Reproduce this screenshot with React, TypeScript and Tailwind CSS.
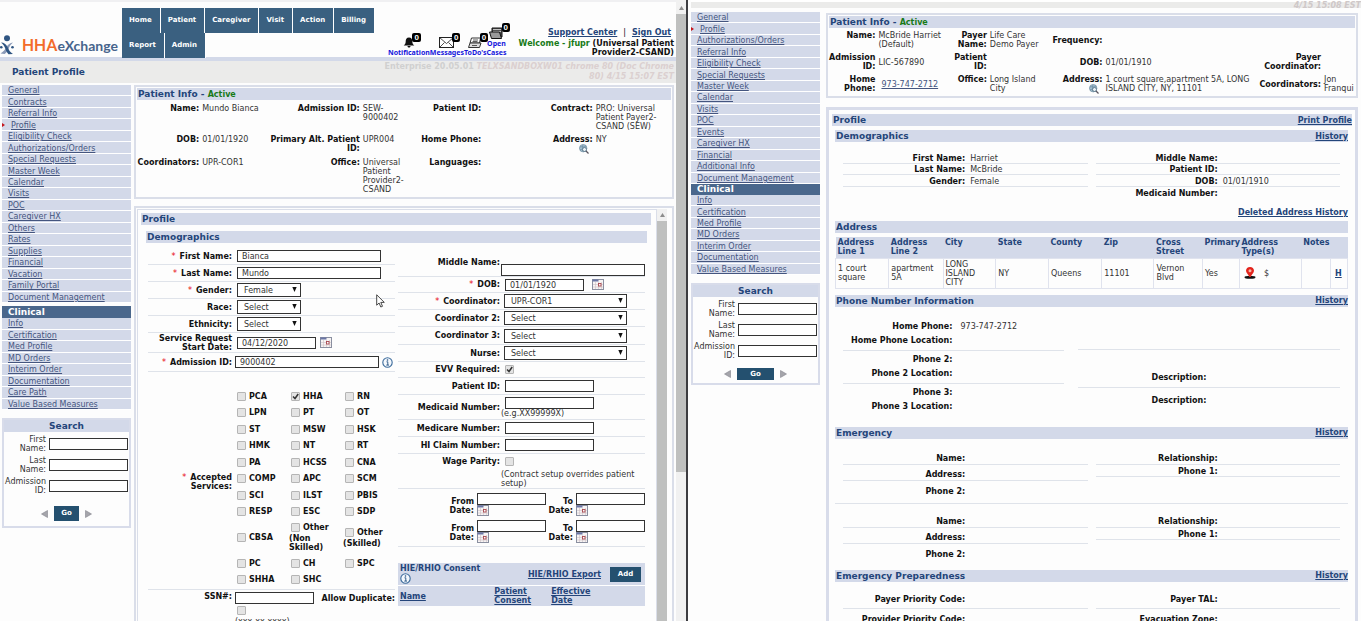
import { useState } from 'react';
import type { ReactNode } from 'react';

const patientLinks = [
    'General', 'Contracts', 'Referral Info', 'Profile', 'Eligibility Check', 'Authorizations/Orders',
    'Special Requests', 'Master Week', 'Calendar', 'Visits', 'POC', 'Caregiver HX', 'Others', 'Rates',
    'Supplies', 'Financial', 'Vacation', 'Family Portal', 'Document Management',
];
const patientClinicalLinks = [
    'Info', 'Certification', 'Med Profile', 'MD Orders', 'Interim Order', 'Documentation', 'Care Path',
    'Value Based Measures',
];
const payerLinks = [
    'General', 'Profile', 'Authorizations/Orders', 'Referral Info', 'Eligibility Check', 'Special Requests',
    'Master Week', 'Calendar', 'Visits', 'POC', 'Events', 'Caregiver HX', 'Financial', 'Additional Info',
    'Document Management',
];
const payerClinicalLinks = [
    'Info', 'Certification', 'Med Profile', 'MD Orders', 'Interim Order', 'Documentation',
    'Value Based Measures',
];
const tabs = ['Home', 'Patient', 'Caregiver', 'Visit', 'Action', 'Billing', 'Report', 'Admin'];

const services = [
    'PCA', 'HHA', 'RN', 'LPN', 'PT', 'OT', 'ST', 'MSW', 'HSK', 'HMK', 'NT', 'RT', 'PA', 'HCSS', 'CNA',
    'COMP', 'APC', 'SCM', 'SCI', 'ILST', 'PBIS', 'RESP', 'ESC', 'SDP',
];
const otherServices = ['CBSA', 'Other (Non Skilled)', 'Other (Skilled)'];
const moreServices = ['PC', 'CH', 'SPC', 'SHHA', 'SHC'];

const inputClass = 'h-3 border border-[#333] bg-white px-1 pt-[1px] text-[8px] leading-[9px] text-[#333] outline-none';

/* ---------- Icons ---------- */

const CalendarIcon = () => (
    <svg className="h-[11px] w-3 shrink-0" viewBox="0 0 12 11">
        <rect x="0.5" y="0.5" width="11" height="10" fill="#f7f4f4" stroke="#8a8fa0" />
        <rect x="0.5" y="0.5" width="6" height="2" fill="#6b76a5" />
        <path d="M3.5 3v7M6.5 3v7M9.5 3v7M1 5.500h10M1 8h10" stroke="#cdbfc4" strokeWidth="0.6" />
        <rect x="6.500" y="4.500" width="2.500" height="2.500" fill="#fff" stroke="#a8474f" strokeWidth="0.9" />
    </svg>
);

const InfoIcon = () => (
    <svg className="h-[11px] w-[11px] shrink-0" viewBox="0 0 11 11">
        <circle cx="5.500" cy="5.500" r="4.700" fill="#f4f8fd" stroke="#3d6c9c" strokeWidth="1.100" />
        <circle cx="5.500" cy="3" r="0.800" fill="#1f4e80" />
        <path d="M4.500 4.800h1.300v3.200M4.300 8.100h2.700" stroke="#1f4e80" fill="none" strokeWidth="0.900" />
    </svg>
);

const GlobeIcon = () => (
    <svg className="h-[10px] w-[10px] shrink-0" viewBox="0 0 10 10">
        <circle cx="4.200" cy="4.200" r="3.700" fill="#a9c3d3" stroke="#7592a5" strokeWidth="0.800" />
        <path d="M1 3c2-1 3 1 6-1M1 6c2-1 3 0 4-1M4 1c-1 2-1 4 0 6" stroke="#5d7f95" strokeWidth="0.600" fill="none" />
        <circle cx="5.500" cy="5.500" r="2" fill="#e9f1f6" stroke="#4e6c80" strokeWidth="0.800" />
        <path d="M7 7l2.500 2.500" stroke="#5b5560" strokeWidth="1.300" />
    </svg>
);

const LogoMark = () => (
    <svg className="h-5 w-[14px] shrink-0" viewBox="0 0 14 20">
        <circle cx="7" cy="3.300" r="3" fill="#2f5582" />
        <path d="M13 7.500c-3 .3-5 2-6.500 4.500-1.300 2.500-3 4.500-6 6.500l4.200.5c2-1.500 3-3.500 4-5.500 1-2.500 2-4 4.300-6z" fill="#8a9ab8" />
        <path d="M1 7.500c3 .2 5 1.500 6.500 4.500 1.300 3 2.500 5 5.500 7l-4.500.3c-1.500-1.500-2.300-3.300-3-5.300-1-2.500-2-4.500-4.500-6.500z" fill="#2f5582" />
        <circle cx="12.500" cy="12.300" r="1.300" fill="#2f5582" />
        <circle cx="1.300" cy="12.300" r="1.300" fill="#2f5582" />
    </svg>
);

const BellIcon = () => (
    <svg className="h-[11px] w-3" viewBox="0 0 12 11">
        <path d="M6 0.500c2.500 0 3.300 1.800 3.300 4 0 2 .8 3 2 4H.7c1.200-1 2-2 2-4 0-2.200.8-4 3.300-4z" fill="#111" />
        <path d="M4.500 9h3c0 2-3 2-3 0z" fill="#111" />
    </svg>
);
const MailIcon = () => (
    <svg className="h-[11px] w-[15px]" viewBox="0 0 15 11">
        <rect x="0.500" y="0.500" width="14" height="10" fill="#fff" stroke="#222" />
        <path d="M.5.5l7 6 7-6M.5 10.500l5-5M14.500 10.500l-5-5" fill="none" stroke="#222" strokeWidth="0.800" />
    </svg>
);
const TodoIcon = () => (
    <svg className="h-[11px] w-[14px]" viewBox="0 0 14 11">
        <path d="M3.500 1h9l-1 5H2z" fill="#fff" stroke="#333" />
        <path d="M2 6l-1.500 4.500h11L13 6z" fill="#ddd" stroke="#333" />
        <path d="M5 3h5M4.500 4.500h5M4 8.500h5" stroke="#333" strokeWidth="0.800" />
    </svg>
);
const CasesIcon = () => (
    <svg className="h-3 w-[15px]" viewBox="0 0 15 12">
        <path d="M3 1h10v9H3z" fill="#555" stroke="#111" />
        <path d="M4 2.500h8M4 4.500h8" stroke="#ddd" strokeWidth="0.800" />
        <path d="M.5 5h10l2 6.500h-10z" fill="#999" stroke="#111" />
    </svg>
);
const PinIcon = () => (
    <svg className="h-3 w-3" viewBox="0 0 12 12">
        <ellipse cx="6" cy="10.300" rx="5.500" ry="1.500" fill="#111" />
        <path d="M6 0c2.400 0 4 1.600 4 3.800C10 6 7.500 7.300 6.600 10H5.400C4.500 7.300 2 6 2 3.800 2 1.600 3.600 0 6 0z" fill="#e3241c" />
        <circle cx="6" cy="3.700" r="1.500" fill="#f7b5a8" />
    </svg>
);
const Arrow = ({ left = false }: { left?: boolean }) => (
    <svg className="h-2 w-[7px]" viewBox="0 0 7 8">
        <path d={left ? 'M6.500 0.500v7L0.500 4z' : 'M0.500 0.500v7L6.500 4z'} fill="#a5a5ab" stroke="#85858d" strokeWidth="0.600" />
    </svg>
);

/* ---------- Shared pieces ---------- */

function NavList({ links }: { links: string[] }) {
    return (
        <>
            {links.map((link) => (
                <li key={link} className="flex items-center border-b border-white bg-[#d3d9e9] pl-[6px] pt-[1px]">
                    {link === 'Profile' && (
                        <svg className="-ml-[6px] h-1 w-[3px]" viewBox="0 0 3 4"><path d="M0 0l3 2-3 2z" fill="#c4151c" /></svg>
                    )}
                    <a href="#" className={`text-[#44557f] underline ${link === 'Profile' ? 'ml-[6px]' : ''}`}>{link}</a>
                </li>
            ))}
        </>
    );
}

function SearchBox({ id, wide = false }: { id: string; wide?: boolean }) {
    const fields = [['First', 'Name:'], ['Last', 'Name:'], ['Admission', 'ID:']];
    return (
        <form className={`mt-2 border-2 border-[#d8dcea] ${wide ? 'pb-[3px]' : 'pb-[5px]'}`}>
            <h3 className="bg-[#d3d9e9] text-center text-[9px] font-bold leading-3 text-[#24457a]">Search</h3>
            {fields.map(([first, second]) => (
                <div key={first} className="mt-[2px] flex h-[19px] items-center justify-end gap-[3px] pr-[1px]">
                    <label htmlFor={`${id}-${first}`} className="text-right text-[#333]">{first}<br />{second}</label>
                    <input id={`${id}-${first}`} className={`${inputClass} w-[79px]`} />
                </div>
            ))}
            <div className={`flex items-center justify-center gap-[6px] ${wide ? 'mt-2' : 'mt-[11px]'}`}>
                <button type="button" aria-label="Previous"><Arrow left /></button>
                <button type="button" className={`bg-[#24506f] text-[7px] font-bold text-white ${wide ? 'h-3 w-[37px]' : 'h-[15px] w-[25px]'}`}>Go</button>
                <button type="button" aria-label="Next"><Arrow /></button>
            </div>
        </form>
    );
}

function Bar({ title, action, className = '' }: { title: ReactNode; action?: string; className?: string }) {
    return (
        <div className={`flex h-3 items-center justify-between bg-[#d3d9e9] pl-[1px] ${className}`}>
            <h2 className="text-[9px] font-bold leading-3 text-[#24457a]">{title}</h2>
            {action && <a href="#" className="font-bold text-[#24457a] underline">{action}</a>}
        </div>
    );
}

function Checkbox({ id, checked = false }: { id: string; checked?: boolean }) {
    const [on, setOn] = useState(checked);
    return (
        <span className="relative inline-block h-[9px] w-[9px] shrink-0">
            <input
                id={id}
                type="checkbox"
                checked={on}
                onChange={() => setOn(!on)}
                className="block h-[9px] w-[9px] appearance-none rounded-[1px] border border-[#b5b5b5] bg-[#e4e4e4]"
            />
            {on && (
                <svg className="pointer-events-none absolute inset-0 h-[9px] w-[9px]" viewBox="0 0 9 9">
                    <path d="M2 4.500l2 2L7.200 2" fill="none" stroke="#333" strokeWidth="1.500" />
                </svg>
            )}
        </span>
    );
}

function Select({ id, value, className }: { id: string; value: string; className: string }) {
    return (
        <span className={`relative ${className}`}>
            <select id={id} defaultValue={value} className="block h-[14px] w-full appearance-none border border-[#333] bg-white pl-[6px] pt-[1px] text-[8px] leading-[9px] text-[#333]">
                <option>{value}</option>
            </select>
            <svg className="pointer-events-none absolute right-1 top-1 h-[5px] w-[5px]" viewBox="0 0 5 5"><path d="M0.300 0h4.400L2.500 5z" fill="#111" /></svg>
        </span>
    );
}

interface FieldProps {
    id: string;
    label: ReactNode;
    required?: boolean;
    className: string;
    labelClass: string;
    children: ReactNode;
}

function Field({ id, label, required, className, labelClass, children }: FieldProps) {
    return (
        <div className={`flex items-center border-b border-[#dfe3ea] ${className}`}>
            <label htmlFor={id} className={`shrink-0 text-right font-bold ${labelClass}`}>
                {required && <span className="mr-1 font-normal text-red-600">*</span>}
                {label}
            </label>
            {children}
        </div>
    );
}

function Service({ name }: { name: string }) {
    const [first, ...rest] = name.split(' ');
    return (
        <div className="self-center">
            <div className="flex items-center gap-[3px]">
                <Checkbox id={name} checked={name === 'HHA'} />
                <label htmlFor={name} className="font-bold">{first}</label>
            </div>
            {rest.length > 0 && <div className="-ml-[2px] mt-[2px] font-bold">{rest.map((word) => <div key={word} className="whitespace-nowrap">{word}</div>)}</div>}
        </div>
    );
}

/* Label and value on the read-only pages */
function Info({ label, value = '', center = false, icon }: { label: ReactNode; value?: ReactNode; center?: boolean; icon?: ReactNode }) {
    return (
        <>
            <dt className={`text-right font-bold ${center ? 'self-center' : ''}`}>
                {label}
                {icon && <span className="flex justify-end pr-1">{icon}</span>}
            </dt>
            <dd className={`whitespace-nowrap pl-[3px] text-[#333] ${center ? 'self-center' : ''}`}>{value}</dd>
        </>
    );
}

/* ---------- Left window ---------- */

function Header() {
    const counters = [
        { label: 'Notification', icon: <BellIcon /> },
        { label: 'Messages', icon: <MailIcon /> },
        { label: "ToDo's", icon: <TodoIcon /> },
        { label: 'Cases', icon: <CasesIcon /> },
    ];
    return (
        <header>
            <div className="flex h-[57px] border-t-2 border-[#f0f0f2]">
                <a href="#" className="flex w-[122px] shrink-0 items-end pb-[2px]">
                    <LogoMark />
                    <span className="ml-2 whitespace-nowrap font-['Roboto',sans-serif] text-[17px] font-medium leading-[18px] text-[#f36b2b]">
                        HHA<span className="font-['Lato',sans-serif] text-[14px] font-bold text-[#47648c]">eXchange</span>
                    </span>
                </a>
                <nav className="mt-[6px] flex w-[256px] shrink-0 flex-wrap content-start">
                    {tabs.map((tab) => (
                        <a key={tab} href="#" className="flex h-[25px] items-center border-r border-white bg-[#3a6080] pl-[7px] pr-2 text-[7px] font-bold text-white">{tab}</a>
                    ))}
                </nav>
                <div className="ml-[10px] flex items-end font-['Noto_Sans',sans-serif] text-[7px] font-bold leading-[9px] text-[#1414dc]">
                    {counters.map(({ label, icon }) => (
                        <a key={label} href="#" className="flex flex-col items-center">
                            <span className="relative">
                                {icon}
                                <span className="absolute -right-[6px] -top-1 rounded-[2px] bg-black px-[2px] font-['Liberation_Sans',sans-serif] text-[8px] leading-[9px] text-white">0</span>
                            </span>
                            {label === 'Cases' && <span>Open</span>}
                            {label}
                        </a>
                    ))}
                </div>
                <div className="ml-auto pr-[2px] pt-[26px] text-right font-bold">
                    <p className="pr-[3px]"><a href="#" className="text-[#24457a] underline">Support Center</a><span className="mx-[6px] font-normal">|</span><a href="#" className="text-[#24457a] underline">Sign Out</a></p>
                    <p className="mt-[2px] whitespace-nowrap"><span className="text-[#187a18]">Welcome - jfupr</span> (Universal Patient<br />Provider2-CSAND)</p>
                </div>
            </div>
            <div className="flex h-[26px] items-start justify-between border-t-4 border-[#d3d9e9] bg-[#ebebea] pl-3 pr-[2px]">
                <h1 className="pt-[5px] text-[9px] font-bold leading-3 text-[#24457a]">Patient Profile</h1>
                <p className="pt-[1px] text-right font-bold leading-[10px] text-[#d0d0d0]">Enterprise 20.05.01 <em className="text-[#dbd0d0]">TELXSANDBOXW01 chrome 80 (Doc Chrome<br />80) 4/15 15:07 EST</em></p>
            </div>
        </header>
    );
}

function PatientInfo() {
    return (
        <section className="h-[114px] border-2 border-[#dadee9] p-[1px]">
            <Bar title={<>Patient Info - <span className="text-[8px] text-[#187a18]">Active</span></>} />
            <dl className="grid grid-cols-[62fr_61fr_99fr_48fr_73fr_50fr_61fr_78fr] grid-rows-[31px_23px_39px] pt-1">
                <Info label="Name:" value="Mundo Bianca" />
                <Info label="Admission ID:" value={<>SEW-<br />9000402</>} />
                <Info label="Patient ID:" />
                <Info label="Contract:" value={<>PRO: Universal<br />Patient Payer2-<br />CSAND (SEW)</>} />
                <Info label="DOB:" value="01/01/1920" />
                <Info label={<>Primary Alt. Patient<br />ID:</>} value="UPR004" />
                <Info label="Home Phone:" />
                <Info label="Address:" value="NY" icon={<GlobeIcon />} />
                <Info label="Coordinators:" value="UPR-COR1" />
                <Info label="Office:" value={<>Universal<br />Patient<br />Provider2-<br />CSAND</>} />
                <Info label="Languages:" />
            </dl>
        </section>
    );
}

function DemographicsLeft() {
    const label = 'w-[84px]';
    return (
        <div>
            <Field id="first" label="First Name:" required className="h-[17px]" labelClass={label}>
                <input id="first" defaultValue="Bianca" className={`${inputClass} ml-[5px] w-[144px]`} />
            </Field>
            <Field id="last" label="Last Name:" required className="h-[17px]" labelClass={label}>
                <input id="last" defaultValue="Mundo" className={`${inputClass} ml-[5px] w-[144px]`} />
            </Field>
            <Field id="gender" label="Gender:" required className="h-[17px]" labelClass={label}>
                <Select id="gender" value="Female" className="ml-[5px] w-16" />
            </Field>
            <Field id="race" label="Race:" className="h-[17px]" labelClass={label}>
                <Select id="race" value="Select" className="ml-[5px] w-16" />
            </Field>
            <Field id="ethnicity" label="Ethnicity:" className="h-[17px]" labelClass={label}>
                <Select id="ethnicity" value="Select" className="ml-[5px] w-16" />
            </Field>
            <Field id="start" label={<>Service Request<br />Start Date:</>} className="h-5" labelClass={label}>
                <input id="start" defaultValue="04/12/2020" className={`${inputClass} ml-[5px] mr-1 w-[79px]`} />
                <CalendarIcon />
            </Field>
            <Field id="admission" label="Admission ID:" required className="h-[19px]" labelClass={label}>
                <input id="admission" defaultValue="9000402" className={`${inputClass} ml-[3px] mr-[3px] w-[144px]`} />
                <InfoIcon />
            </Field>
            <fieldset className="flex items-center border-b border-[#dfe3ea] pb-[1px] pt-4">
                <div className="w-[84px] shrink-0 pb-3 text-right font-bold"><span className="mr-1 font-normal text-red-600">*</span>Accepted<br />Services:</div>
                <div className="ml-[5px] flex-1">
                    <div className="grid h-[132px] auto-rows-fr grid-cols-[54px_54px_1fr]">
                        {services.map((name) => <Service key={name} name={name} />)}
                    </div>
                    <div className="grid h-[35px] grid-cols-[54px_54px_1fr]">
                        {otherServices.map((name) => <Service key={name} name={name} />)}
                    </div>
                    <div className="grid h-[33px] auto-rows-fr grid-cols-[54px_54px_1fr]">
                        {moreServices.map((name) => <Service key={name} name={name} />)}
                    </div>
                </div>
            </fieldset>
            <div className="flex items-start pt-[2px]">
                <label htmlFor="ssn" className="w-[84px] shrink-0 text-right font-bold">SSN#:</label>
                <div className="ml-[3px]">
                    <input id="ssn" className={`${inputClass} block w-[79px]`} />
                    <div className="ml-[2px] mt-[2px]"><Checkbox id="duplicate" /></div>
                    <p className="text-[#333]">(xxx-xx-xxxx)</p>
                </div>
                <label htmlFor="duplicate" className="ml-auto whitespace-nowrap pt-[2px] font-bold">Allow Duplicate:</label>
            </div>
        </div>
    );
}

function DateRange({ id }: { id: string }) {
    return (
        <div className="flex h-[27px] items-start justify-end pt-[1px]">
            {['From', 'To'].map((edge) => (
                <div key={edge} className="flex gap-[3px]">
                    <label htmlFor={`${id}-${edge}`} className="w-[27px] pt-[4px] text-right font-bold">{edge}<br />Date:</label>
                    <div>
                        <input id={`${id}-${edge}`} className={`${inputClass} block w-[69px]`} />
                        <CalendarIcon />
                    </div>
                </div>
            ))}
        </div>
    );
}

function DemographicsRight() {
    const label = 'w-[102px]';
    return (
        <div>
            <Field id="middle" label="Middle Name:" className="h-[29px]" labelClass={label}>
                <input id="middle" className={`${inputClass} ml-[1px] w-[144px] self-end`} />
            </Field>
            <Field id="dob" label="DOB:" required className="h-4" labelClass={label}>
                <input id="dob" defaultValue="01/01/1920" className={`${inputClass} ml-[5px] mr-2 w-[79px]`} />
                <CalendarIcon />
            </Field>
            <Field id="coord1" label="Coordinator:" required className="h-[17px]" labelClass={label}>
                <Select id="coord1" value="UPR-COR1" className="ml-1 w-[123px]" />
            </Field>
            <Field id="coord2" label="Coordinator 2:" className="h-[17px]" labelClass={label}>
                <Select id="coord2" value="Select" className="ml-1 w-[123px]" />
            </Field>
            <Field id="coord3" label="Coordinator 3:" className="h-[18px]" labelClass={label}>
                <Select id="coord3" value="Select" className="ml-1 w-[123px]" />
            </Field>
            <Field id="nurse" label="Nurse:" className="h-[17px]" labelClass={label}>
                <Select id="nurse" value="Select" className="ml-1 w-[123px]" />
            </Field>
            <Field id="evv" label="EVV Required:" className="h-4 gap-[5px]" labelClass={label}>
                <Checkbox id="evv" checked />
            </Field>
            <Field id="pid" label="Patient ID:" className="h-[17px]" labelClass={label}>
                <input id="pid" className={`${inputClass} ml-[5px] w-[89px]`} />
            </Field>
            <Field id="medicaid" label="Medicaid Number:" className="h-[25px]" labelClass={label}>
                <div className="ml-[1px] pt-[1px]">
                    <input id="medicaid" className={`${inputClass} ml-1 block w-[89px]`} />
                    <p className="text-[#333]">(e.g.XX99999X)</p>
                </div>
            </Field>
            <Field id="medicare" label="Medicare Number:" className="h-[17px]" labelClass={label}>
                <input id="medicare" className={`${inputClass} ml-[5px] w-[89px]`} />
            </Field>
            <Field id="claim" label="HI Claim Number:" className="h-[17px]" labelClass={label}>
                <input id="claim" className={`${inputClass} ml-[5px] w-[89px]`} />
            </Field>
            <div className="h-[35px] border-b border-[#dfe3ea] pt-[3px]">
                <div className="flex items-center gap-[5px]">
                    <label htmlFor="wage" className={`${label} text-right font-bold`}>Wage Parity:</label>
                    <Checkbox id="wage" />
                </div>
                <p className="ml-[103px] mt-1 whitespace-nowrap text-[#333]">(Contract setup overrides patient<br />setup)</p>
            </div>
            <div className="h-[58px] border-b border-[#dfe3ea] pt-[3px]">
                <DateRange id="first-range" />
                <DateRange id="second-range" />
            </div>
            <div className="mt-4 flex h-[23px] items-center justify-between border-b border-white bg-[#d3d9e9] pl-[2px] pr-1 font-bold text-[#24457a]">
                <div>HIE/RHIO Consent<InfoIcon /></div>
                <a href="#" className="ml-auto mr-[9px] underline">HIE/RHIO Export</a>
                <button type="button" className="h-[15px] w-[31px] bg-[#24506f] text-[7px] text-white">Add</button>
            </div>
            <table className="w-full table-fixed bg-[#d3d9e9] text-left text-[#24457a]">
                <thead>
                    <tr className="h-5">
                        <th className="w-[39%] pl-[2px]"><a href="#" className="underline">Name</a></th>
                        <th className="w-[23%]"><a href="#" className="underline">Patient<br />Consent</a></th>
                        <th><a href="#" className="underline">Effective<br />Date</a></th>
                    </tr>
                </thead>
            </table>
        </div>
    );
}

function ScrollBar({ thumbClass, className }: { thumbClass: string; className: string }) {
    return (
        <div className={`flex shrink-0 flex-col items-center bg-[#f1f1f1] ${className}`}>
            <svg className="my-1 h-1 w-[5px] shrink-0" viewBox="0 0 5 4"><path d="M2.500 0L5 4H0z" fill="#8d8d8d" /></svg>
            <div className={`w-full bg-[#bfc0bf] ${thumbClass}`} />
        </div>
    );
}

function PatientWindow() {
    return (
        <div className="flex overflow-hidden">
            <div className="relative min-w-0 flex-1">
                <Header />
                <div className="flex gap-[3px] pl-[2px] pt-[2px]">
                    <aside className="w-[129px] shrink-0">
                        <ul className="grid h-[218px] auto-rows-fr"><NavList links={patientLinks} /></ul>
                        <h3 className="mt-[3px] bg-[#4a678c] pl-[6px] text-[9px] font-bold leading-[12px] text-white">Clinical</h3>
                        <ul className="grid h-[92px] auto-rows-fr"><NavList links={patientClinicalLinks} /></ul>
                        <SearchBox id="patient" />
                    </aside>
                    <main className="min-w-0 flex-1 pr-[2px]">
                        <PatientInfo />
                        <div className="mt-[7px] flex h-screen border-2 border-[#dadee9] p-[1px]">
                            <div className="min-w-0 flex-1 border border-[#dadee9] px-[3px] pt-[3px]">
                                <Bar title="Profile" className="mr-[2px]" />
                                <div className="mt-[6px] pl-[5px] pr-[6px]">
                                    <Bar title="Demographics" />
                                    <form className="grid grid-cols-2 gap-[3px] pl-[2px] pr-[2px] pt-[5px]">
                                        <DemographicsLeft />
                                        <DemographicsRight />
                                    </form>
                                </div>
                            </div>
                            <ScrollBar className="w-[10px]" thumbClass="flex-1" />
                            <div className="w-1" />
                        </div>
                    </main>
                </div>
                <svg className="absolute left-[376px] top-[294px] h-[14px] w-[9px]" viewBox="0 0 9 14">
                    <path d="M.7.800v10.400l2.400-2.200 1.700 4 1.700-.7-1.700-3.900h3.500z" fill="#fff" stroke="#333" strokeWidth="0.900" />
                </svg>
            </div>
            <ScrollBar className="w-[10px] pt-[2px]" thumbClass="h-[74%]" />
        </div>
    );
}

/* ---------- Right window ---------- */

function Pair({ label, value, line = true, className = '' }: { label: string; value?: string; line?: boolean; className?: string }) {
    return (
        <div className={`grid grid-cols-[125fr_120fr] items-end gap-[5px] ${line ? 'border-b border-[#dfe3ea]' : ''} ${className}`}>
            <span className="whitespace-nowrap text-right font-bold">{label}</span>
            <span className="text-[#333]">{value}</span>
        </div>
    );
}

function PhonePair({ label, value }: { label: string; value?: string }) {
    return (
        <div className="grid h-[14px] grid-cols-[109fr_103fr] gap-2">
            <span className="whitespace-nowrap text-right font-bold">{label}</span>
            <span className="text-[#333]">{value}</span>
        </div>
    );
}

function EmergencyContact({ last = false }: { last?: boolean }) {
    return (
        <div className={`grid grid-cols-2 gap-2 px-2 ${last ? 'pb-[11px] pt-3' : 'border-b border-[#dfe3ea] pb-[7px] pt-[14px]'}`}>
            <div>
                <Pair label="Name:" className="h-3 pb-[1px]" />
                <Pair label="Address:" className="h-4 pb-[1px]" />
                <Pair label="Phone 2:" line={false} className="h-[15px]" />
            </div>
            <div>
                <Pair label="Relationship:" className="h-3 pb-[1px]" />
                <Pair label="Phone 1:" className="h-3" />
            </div>
        </div>
    );
}

function AddressTable() {
    const columns = ['Address Line 1', 'Address Line 2', 'City', 'State', 'County', 'Zip', 'Cross Street', 'Primary', 'Address Type(s)', 'Notes', ''];
    const cells: ReactNode[] = [
        <>1 court<br />square</>, <>apartment<br />5A</>, <>LONG<br />ISLAND<br />CITY</>, 'NY', 'Queens', '11101', <>Vernon<br />Blvd</>, 'Yes',
        <span className="flex items-center gap-2 pl-[2px]"><PinIcon />$</span>, '', <a href="#" className="pl-[2px] font-bold text-[#24457a] underline">H</a>,
    ];
    return (
        <table className="mt-1 w-full table-fixed border-collapse text-left">
            <colgroup>
                <col className="w-[10.4%]" /><col className="w-[10.6%]" /><col className="w-[10.3%]" /><col className="w-[10.3%]" />
                <col className="w-[10.4%]" /><col className="w-[10.2%]" /><col className="w-[9.5%]" /><col className="w-[7.2%]" />
                <col className="w-[12.1%]" /><col className="w-[5.7%]" /><col />
            </colgroup>
            <thead>
                <tr className="h-[21px] bg-[#d3d9e9] align-top text-[#24457a]">
                    {columns.map((column) => <th key={column} className="pl-[2px] pt-[1px] font-bold">{column}</th>)}
                </tr>
            </thead>
            <tbody>
                <tr className="h-[30px] text-[#333]">
                    {cells.map((cell, i) => <td key={columns[i]} className="border border-[#e0e3ee] pl-[2px]">{cell}</td>)}
                </tr>
            </tbody>
        </table>
    );
}

function PayerWindow() {
    return (
        <div className="min-w-0 overflow-hidden border-l-2 border-[#3c3c40] pl-[3px]">
            <div className="flex h-2 items-center justify-end border-t-2 border-white bg-[#ebebea] font-bold italic text-[#cfc8c8]">4/15 15:08 EST</div>
            <div className="flex gap-[6px] pt-1">
                <aside className="w-[129px] shrink-0">
                    <ul className="grid h-[172px] auto-rows-fr"><NavList links={payerLinks} /></ul>
                    <h3 className="bg-[#4a678c] pl-[6px] text-[9px] font-bold leading-[11px] text-white">Clinical</h3>
                    <ul className="grid h-20 auto-rows-fr"><NavList links={payerClinicalLinks} /></ul>
                    <SearchBox id="payer" wide />
                </aside>
                <main className="min-w-0 flex-1 pr-[3px] pt-[1px]">
                    <section className="h-[85px] border-2 border-[#dadee9] p-[1px]">
                        <Bar title={<>Patient Info - <span className="text-[8px] text-[#187a18]">Active</span></>} />
                        <dl className="grid grid-cols-[46fr_64fr_46fr_56fr_60fr_148fr_71fr_34fr] grid-rows-[18px_18px_18px] gap-y-[4px] pt-[3px]">
                            <Info label="Name:" value={<>McBride Harriet<br />(Default)</>} />
                            <Info label={<>Payer<br />Name:</>} value={<>Life Care<br />Demo Payer</>} />
                            <Info label="Frequency:" center />
                            <Info label="" />
                            <Info label={<>Admission<br />ID:</>} value="LIC-567890" center />
                            <Info label={<>Patient<br />ID:</>} />
                            <Info label="DOB:" value="01/01/1910" center />
                            <Info label={<>Payer<br />Coordinator:</>} />
                            <Info label={<>Home<br />Phone:</>} value={<a href="#" className="pl-[3px] text-[#44557f] underline">973-747-2712</a>} center />
                            <Info label="Office:" value={<>Long Island<br />City</>} />
                            <Info label="Address:" value={<>1 court square,apartment 5A, LONG<br />ISLAND CITY, NY, 11101</>} icon={<GlobeIcon />} />
                            <Info label="Coordinators:" value={<>Jon<br />Franqui</>} center />
                        </dl>
                    </section>
                    <section className="mt-[9px] h-screen border-[3px] border-[#d8dcea] px-[3px] pt-1">
                        <Bar title="Profile" action="Print Profile" />
                        <div className="mt-1 pl-[3px] pr-[4px]">
                            <Bar title="Demographics" action="History" />
                            <div className="grid grid-cols-2 gap-2 px-2 pt-[10px]">
                                <div>
                                    <Pair label="First Name:" value="Harriet" className="h-3" />
                                    <Pair label="Last Name:" value="McBride" className="h-[11px]" />
                                    <Pair label="Gender:" value="Female" className="h-3" />
                                </div>
                                <div>
                                    <Pair label="Middle Name:" className="h-3" />
                                    <Pair label="Patient ID:" className="h-[11px]" />
                                    <Pair label="DOB:" value="01/01/1910" className="h-3" />
                                    <Pair label="Medicaid Number:" line={false} className="h-[11px]" />
                                </div>
                            </div>
                            <div className="mt-[10px] flex justify-end"><a href="#" className="font-bold text-[#24457a] underline">Deleted Address History</a></div>
                            <Bar title="Address" className="mt-1" />
                            <AddressTable />
                            <Bar title="Phone Number Information" action="History" className="mt-[6px]" />
                            <div className="grid grid-cols-[220fr_261fr] items-start gap-[14px] px-2 pt-[15px]">
                                <div>
                                    <div className="border-b border-[#dfe3ea]"><PhonePair label="Home Phone:" value="973-747-2712" /><PhonePair label="Home Phone Location:" /></div>
                                    <div className="border-b border-[#dfe3ea] pt-1"><PhonePair label="Phone 2:" /><PhonePair label="Phone 2 Location:" /></div>
                                    <div className="pt-1"><PhonePair label="Phone 3:" /><PhonePair label="Phone 3 Location:" /></div>
                                </div>
                                <div className="grid grid-cols-[128fr_133fr] text-right font-bold">
                                    <div className="col-span-2 h-7 border-b border-[#dfe3ea]" />
                                    <div className="flex h-[38px] items-end justify-end border-b border-[#dfe3ea] pb-[5px]">Description:</div>
                                    <div className="border-b border-[#dfe3ea]" />
                                    <div className="pt-2">Description:</div>
                                </div>
                            </div>
                            <Bar title="Emergency" action="History" className="mt-[11px]" />
                            <EmergencyContact />
                            <EmergencyContact last />
                            <Bar title="Emergency Preparedness" action="History" />
                            <div className="grid grid-cols-2 gap-2 px-2 pt-3">
                                <div>
                                    <Pair label="Payer Priority Code:" className="h-[15px] pb-1" />
                                    <Pair label="Provider Priority Code:" className="h-5 pb-1" />
                                </div>
                                <div>
                                    <Pair label="Payer TAL:" className="h-[15px] pb-1" />
                                    <Pair label="Evacuation Zone:" className="h-5 pb-1" />
                                </div>
                            </div>
                        </div>
                    </section>
                </main>
            </div>
        </div>
    );
}

export default function App() {
    return (
        <div className="grid h-screen grid-cols-[686fr_675fr] overflow-hidden bg-[#fdfdfd] font-['DejaVu_Sans',Verdana,sans-serif] text-[8px] leading-[9px] text-[#111]">
            <PatientWindow />
            <PayerWindow />
        </div>
    );
}
